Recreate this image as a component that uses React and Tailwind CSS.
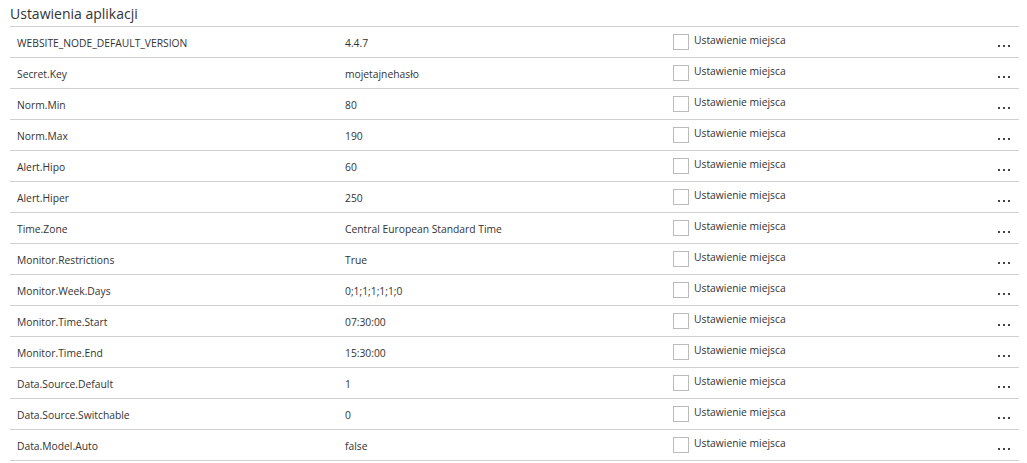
const rows = [
  ['WEBSITE_NODE_DEFAULT_VERSION', '4.4.7'],
  ['Secret.Key', 'mojetajnehasło'],
  ['Norm.Min', '80'],
  ['Norm.Max', '190'],
  ['Alert.Hipo', '60'],
  ['Alert.Hiper', '250'],
  ['Time.Zone', 'Central European Standard Time'],
  ['Monitor.Restrictions', 'True'],
  ['Monitor.Week.Days', '0;1;1;1;1;1;0'],
  ['Monitor.Time.Start', '07:30:00'],
  ['Monitor.Time.End', '15:30:00'],
  ['Data.Source.Default', '1'],
  ['Data.Source.Switchable', '0'],
  ['Data.Model.Auto', 'false'],
]

export default function App() {
  return (
    <div className="w-[1027px] h-[463px] bg-white text-[#333] pl-[10px] pr-[8px]" style={{ fontFamily: '"Open Sans", sans-serif' }}>
      <div className="h-[27px] flex items-center text-[14px] border-b border-[#d0d0d0]">Ustawienia aplikacji</div>
      {rows.map(([name, value]) => (
        <div key={name} className="h-[31px] flex items-center text-[10.3px] border-b border-[#d0d0d0]">
          <div className="w-[335px] pl-[7px] pt-[3px]">{name}</div>
          <div className="w-[328px] pt-[3px]">{value}</div>
          <div className="w-[16px] h-[16px] border border-[#bbb]"></div>
          <div className="ml-[5px] pb-[3px]">Ustawienie miejsca</div>
          <div className="ml-auto mr-[9px] pt-[7px] flex gap-[3px]">
            <span className="w-[2px] h-[2px] bg-[#444]"></span>
            <span className="w-[2px] h-[2px] bg-[#444]"></span>
            <span className="w-[2px] h-[2px] bg-[#444]"></span>
          </div>
        </div>
      ))}
    </div>
  )
}
